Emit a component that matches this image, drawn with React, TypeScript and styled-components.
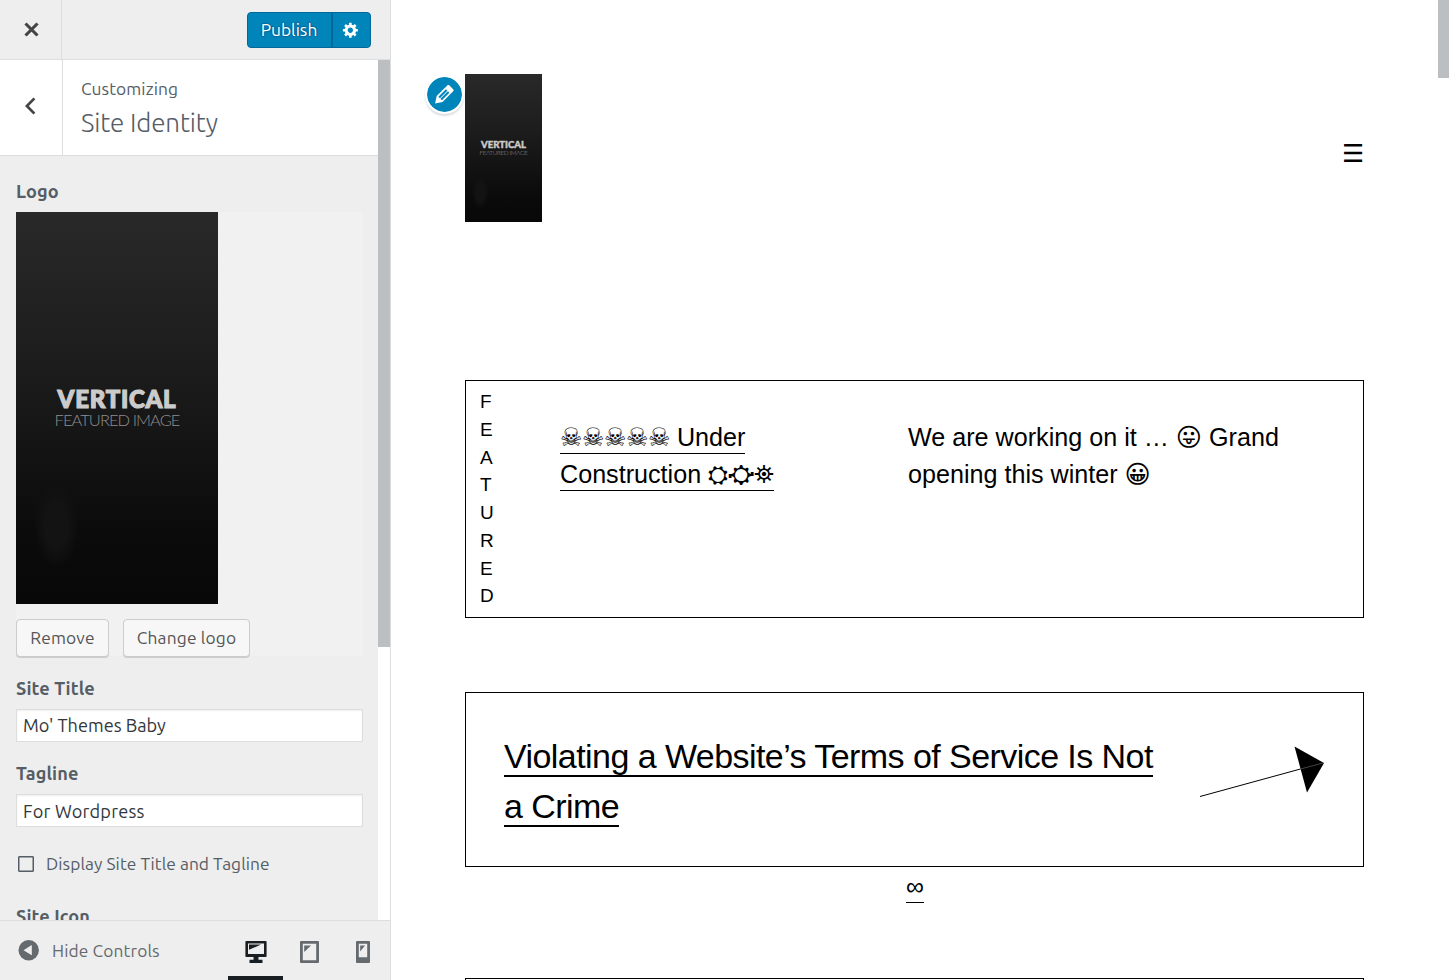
import React from "react";
import styled, { createGlobalStyle } from "styled-components";

const GlobalStyle = createGlobalStyle`
  * { box-sizing: border-box; }
  html, body { margin: 0; padding: 0; background: #fff; overflow: hidden; }
  button, input { font: inherit; margin: 0; }
`;

const uiFont = `"Ubuntu", "Noto Sans", "Open Sans", sans-serif`;
const siteFont = `"Liberation Sans", "DejaVu Sans", sans-serif`;

const Shell = styled.div`
  display: flex;
  width: 1449px;
  height: 980px;
  overflow: hidden;
`;

/* ---------- customizer sidebar ---------- */

const Sidebar = styled.aside`
  display: flex;
  flex-direction: column;
  flex: none;
  width: 391px;
  height: 980px;
  border-right: 1px solid #ddd;
  background: #eee;
  font-family: ${uiFont};
  color: #555d66;
`;

const TopBar = styled.header`
  display: flex;
  align-items: center;
  flex: none;
  height: 60px;
  padding-right: 19px;
  border-bottom: 1px solid #ddd;
`;

const CloseButton = styled.button`
  display: flex;
  align-items: center;
  width: 62px;
  height: 59px;
  margin-right: auto;
  padding: 0 0 0 24px;
  border: 0;
  border-right: 1px solid #ddd;
  background: none;
`;

const PublishGroup = styled.div`
  display: flex;
  height: 36px;
  border: 1px solid #006799;
  border-radius: 4px;
  overflow: hidden;
  background: #0085ba;
`;

const PublishButton = styled.button`
  width: 85px;
  padding: 0 1px 0 0;
  border: 0;
  border-right: 2px solid #006799;
  background: none;
  color: #fff;
  font-size: 17.33px;
  line-height: 34px;
  text-shadow: 0 -1px 1px #006799, 1px 0 1px #006799, 0 1px 1px #006799, -1px 0 1px #006799;
`;

const GearButton = styled.button`
  display: flex;
  align-items: center;
  justify-content: center;
  width: 37px;
  padding: 0 2px 0 0;
  border: 0;
  background: none;
`;

const PanelScroller = styled.div`
  display: flex;
  flex: 1;
  min-height: 0;
`;

const Panel = styled.div`
  display: flex;
  flex-direction: column;
  width: 378px;
  overflow: hidden;
`;

const ScrollTrack = styled.div<{ $width: number }>`
  flex: none;
  width: ${(p) => p.$width}px;
  background: #fff;
`;

const ScrollThumb = styled.div<{ $height: number }>`
  height: ${(p) => p.$height}px;
  background: #bbbfc2;
`;

const PanelHead = styled.div`
  display: flex;
  flex: none;
  height: 96px;
  border-bottom: 1px solid #ddd;
  background: #fff;
`;

const BackButton = styled.button`
  display: flex;
  align-items: center;
  width: 63px;
  padding: 0 0 4px 25px;
  border: 0;
  border-right: 1px solid #ddd;
  background: none;
`;

const PanelTitle = styled.div`
  padding: 17px 0 0 18px;
`;

const Crumb = styled.div`
  font-size: 17.33px;
  line-height: 24px;
  letter-spacing: 0.1px;
`;

const Heading = styled.h1`
  margin: 4px 0 0;
  font-size: 26px;
  font-weight: 300;
  line-height: 36px;
  letter-spacing: -0.13px;
`;

const Controls = styled.div`
  display: flex;
  flex-direction: column;
  padding: 23px 15px 0 16px;
`;

const Label = styled.label<{ $top?: number }>`
  margin: ${(p) => p.$top ?? 0}px 0 9px;
  height: 24px;
  font-size: 18.1px;
  font-weight: 700;
  line-height: 24px;
  letter-spacing: 0.12px;
`;

const LogoSetting = styled.div`
  height: 444px;
  background: #f1f1f1;
`;

const Poster = styled.div<{ $small?: boolean }>`
  display: flex;
  flex-direction: column;
  align-items: center;
  flex: none;
  width: ${(p) => (p.$small ? 77 : 202)}px;
  height: ${(p) => (p.$small ? 148 : 392)}px;
  padding-top: ${(p) => (p.$small ? 65 : 175)}px;
  background: radial-gradient(ellipse 11% 11% at 20% 80%, #131313 50%, transparent),
    linear-gradient(#292929, #1c1c1c 40%, #0b0b0b 82%, #080808);
  font-family: Lato, sans-serif;
  white-space: nowrap;
`;

const PosterTitle = styled.div<{ $small?: boolean }>`
  color: #cbcbcb;
  font-size: ${(p) => (p.$small ? 9.6 : 24)}px;
  font-weight: 900;
  line-height: ${(p) => (p.$small ? 11 : 24)}px;
  letter-spacing: ${(p) => (p.$small ? 0 : 0.75)}px;
  -webkit-text-stroke: ${(p) => (p.$small ? 0.4 : 1.2)}px #cbcbcb;
`;

const PosterSubtitle = styled.div<{ $small?: boolean }>`
  color: ${(p) => (p.$small ? "#999" : "#8e8e8e")};
  font-size: ${(p) => (p.$small ? 6.3 : 16.5)}px;
  font-weight: 300;
  line-height: ${(p) => (p.$small ? 6 : 18)}px;
  letter-spacing: ${(p) => (p.$small ? -0.33 : -0.95)}px;
`;

const ButtonRow = styled.div`
  display: flex;
  gap: 14px;
  margin-top: 15px;
`;

const GreyButton = styled.button<{ $width: number }>`
  width: ${(p) => p.$width}px;
  height: 38px;
  padding: 0;
  border: 1px solid #ccc;
  border-radius: 4px;
  background: #f7f7f7;
  box-shadow: 0 1px 0 #ccc;
  color: #555;
  font-size: 17.33px;
  line-height: 34px;
  letter-spacing: 0.18px;
`;

const TextField = styled.input<{ $lift?: number; $spacing?: number }>`
  width: 347px;
  height: 33px;
  padding: 0 6px ${(p) => p.$lift ?? 0}px;
  border: 1px solid #ddd;
  border-radius: 0;
  outline: 0;
  background: #fff;
  box-shadow: inset 0 1px 2px rgba(0, 0, 0, 0.07);
  color: #32373c;
  font-size: 18.15px;
  letter-spacing: ${(p) => p.$spacing ?? 0}px;
`;

const CheckRow = styled.label`
  display: flex;
  align-items: center;
  height: 24px;
  margin-top: 25px;
  padding-left: 2px;
  font-size: 17.33px;
  letter-spacing: 0.07px;
`;

const CheckText = styled.span`
  padding-bottom: 2px;
`;

const CheckBox = styled.span`
  width: 16px;
  height: 16px;
  margin-right: 12px;
  border: 1.5px solid #555d66;
  border-radius: 1px;
  box-shadow: inset 0 0 0 0.5px #555d66;
`;

const Footer = styled.footer`
  display: flex;
  flex: none;
  height: 60px;
  border-top: 1px solid #ddd;
`;

const HideControls = styled.button`
  display: flex;
  align-items: center;
  flex: none;
  gap: 13px;
  width: 228px;
  height: 59px;
  padding: 0 0 0 18px;
  border: 0;
  background: none;
  color: #656a6f;
  font-size: 17.33px;
  letter-spacing: 0.12px;
`;

const Device = styled.button<{ $active?: boolean; $width: number }>`
  display: flex;
  justify-content: center;
  flex: none;
  width: ${(p) => p.$width}px;
  height: 59px;
  padding: 20px 0 0;
  border: 0;
  border-bottom: 4px solid ${(p) => (p.$active ? "#191e23" : "transparent")};
  background: none;
`;

/* ---------- site preview ---------- */

const Preview = styled.main`
  flex: 1;
  min-width: 0;
  padding: 74px 74px 0;
  font-family: ${siteFont};
  font-size: 25.15px;
  line-height: 37px;
  color: #000;
`;

const SiteHeader = styled.div`
  position: relative;
  display: flex;
  justify-content: space-between;
  height: 306px;
`;

const EditShortcut = styled.button`
  position: absolute;
  left: -40px;
  top: 1px;
  display: flex;
  align-items: center;
  justify-content: center;
  width: 39px;
  height: 39px;
  padding: 0;
  border: 2px solid #fff;
  border-radius: 50%;
  background: #0085ba;
  background-clip: padding-box;
  box-shadow: 0 2px 2px rgba(46, 68, 83, 0.18);
`;

const MenuToggle = styled.span`
  height: 37px;
  margin-top: 61px;
  font-size: 24.67px;
`;

const Featured = styled.section`
  display: flex;
  height: 238px;
  padding: 7px 14px;
  border: 1px solid #000;
`;

const VerticalWord = styled.div`
  display: flex;
  flex-direction: column;
  width: 80px;
  font-size: 19px;
  line-height: 27.75px;
`;

const FeaturedTitle = styled.div`
  width: 348px;
  padding: 31px 100px 0 0;
`;

const FeaturedText = styled.div`
  width: 400px;
  padding-top: 31px;
`;

const SiteLink = styled.a<{ $thick?: boolean }>`
  padding-bottom: ${(p) => (p.$thick ? 0 : 2)}px;
  border-bottom: ${(p) => (p.$thick ? 2 : 1)}px solid #000;
`;

const Skulls = styled.span`
  letter-spacing: -0.55px;
`;

const Card = styled.article`
  display: flex;
  justify-content: space-between;
  height: 175px;
  margin-top: 74px;
  padding: 38px;
  border: 1px solid #000;
`;

const CardTitle = styled.h2`
  width: 670px;
  margin: 0;
  font-size: 34px;
  font-weight: 400;
  line-height: 50px;
  letter-spacing: -0.56px;
`;

const Separator = styled.div`
  height: 37px;
  padding: 1px 0 0 1px;
  text-align: center;
`;

const ArrowIcon = styled.svg`
  flex: none;
  margin: 14px 1px 0 0;
`;

function Artwork({ small }: { small?: boolean }) {
  return (
    <Poster $small={small}>
      <PosterTitle $small={small}>VERTICAL</PosterTitle>
      <PosterSubtitle $small={small}>FEATURED IMAGE</PosterSubtitle>
    </Poster>
  );
}

function GearIcon() {
  return (
    <svg width="17.6" height="17.6" viewBox="0 0 20 20" fill="#fff">
      <path d="M18 12h-2.18c-.17.7-.44 1.35-.81 1.93l1.54 1.54-2.1 2.1-1.54-1.54c-.58.36-1.23.63-1.91.79V19H8v-2.18c-.68-.16-1.33-.43-1.91-.79l-1.54 1.54-2.12-2.12 1.54-1.54c-.36-.58-.63-1.23-.79-1.91H1V9.03h2.17c.16-.7.44-1.35.8-1.94L2.43 5.55l2.1-2.1 1.54 1.54c.58-.37 1.24-.64 1.93-.81V2h3v2.18c.68.16 1.33.43 1.91.79l1.54-1.54 2.12 2.12-1.54 1.54c.36.59.64 1.24.8 1.94H18V12zm-8.5 1.5c1.66 0 3-1.34 3-3s-1.34-3-3-3-3 1.34-3 3 1.34 3 3 3z" />
    </svg>
  );
}

function PencilIcon() {
  return (
    <svg width="26.67" height="26.67" viewBox="0 0 20 20" fill="#fff">
      <path d="M13.89 3.39l2.71 2.72c.46.46.42 1.24.03 1.64l-8.01 8.02-5.56 1.16 1.16-5.58s7.6-7.63 7.99-8.03c.39-.39 1.22-.39 1.68.07zm-2.73 2.79l-5.59 5.61 1.11 1.11 5.54-5.65zm-2.97 8.23l5.58-5.6-1.07-1.08-5.59 5.6z" />
    </svg>
  );
}

export default function App() {
  return (
    <Shell>
      <GlobalStyle />
      <Sidebar>
        <TopBar>
          <CloseButton aria-label="Close">
            <svg width="15" height="15" viewBox="0 0 15 15">
              <path d="M1.5 1.5L13.5 13.5M13.5 1.5L1.5 13.5" stroke="#444" strokeWidth="3.1" />
            </svg>
          </CloseButton>
          <PublishGroup>
            <PublishButton>Publish</PublishButton>
            <GearButton aria-label="Publish settings">
              <GearIcon />
            </GearButton>
          </PublishGroup>
        </TopBar>

        <PanelScroller>
          <Panel>
            <PanelHead>
              <BackButton aria-label="Back">
                <svg width="11" height="18" viewBox="0 0 11 18">
                  <path d="M9.4 1.4L1.9 9L9.4 16.6" fill="none" stroke="#444" strokeWidth="2.7" />
                </svg>
              </BackButton>
              <PanelTitle>
                <Crumb>Customizing</Crumb>
                <Heading>Site Identity</Heading>
              </PanelTitle>
            </PanelHead>
            <Controls>
              <Label>Logo</Label>
              <LogoSetting>
                <Artwork />
                <ButtonRow>
                  <GreyButton $width={93}>Remove</GreyButton>
                  <GreyButton $width={127}>Change logo</GreyButton>
                </ButtonRow>
              </LogoSetting>
              <Label $top={20}>Site Title</Label>
              <TextField $lift={2} defaultValue="Mo' Themes Baby" />
              <Label $top={19}>Tagline</Label>
              <TextField $spacing={0.2} defaultValue="For Wordpress" />
              <CheckRow>
                <CheckBox />
                <CheckText>Display Site Title and Tagline</CheckText>
              </CheckRow>
              <Label $top={28}>Site Icon</Label>
            </Controls>
          </Panel>
          <ScrollTrack $width={12}>
            <ScrollThumb $height={587} />
          </ScrollTrack>
        </PanelScroller>

        <Footer>
          <HideControls>
            <svg width="21" height="21" viewBox="0 0 21 21">
              <circle cx="10.7" cy="10.2" r="10.2" fill="#656a6f" />
              <path d="M5.5 10.2L13.8 5.1V15.3Z" fill="#eee" />
            </svg>
            Hide Controls
          </HideControls>
          <Device $active $width={55} aria-label="Desktop">
            <svg width="22" height="22" viewBox="0 0 22 22" fill="#191e23">
              <path fillRule="evenodd" d="M1.2 0H20.8Q21.6 0 21.6 1V15Q21.6 16 20.8 16H13.5V18.8H17.5V22H4.5V18.8H8.5V16H1.2Q.4 16 .4 15V1Q.4 0 1.2 0ZM3 2.6V13H19V2.6Z" />
              <path d="M4 3.6H16L4 8.8Z" />
            </svg>
          </Device>
          <Device $width={52} aria-label="Tablet">
            <svg width="19" height="22" viewBox="0 0 19 22" fill="#656a6f">
              <path fillRule="evenodd" d="M1 0H18Q19 0 19 1V21Q19 22 18 22H1Q0 22 0 21V1Q0 0 1 0ZM2.8 2.8V19.2H16.2V2.8Z" />
              <path d="M4.2 4.6H11L4.2 11Z" />
            </svg>
          </Device>
          <Device $width={55} aria-label="Mobile">
            <svg width="14" height="22" viewBox="0 0 14 22" fill="#656a6f">
              <path fillRule="evenodd" d="M1 0H13Q14 0 14 1V21Q14 22 13 22H1Q0 22 0 21V1Q0 0 1 0ZM2.8 2.8V16.3H11.2V2.8Z" />
              <path d="M4.2 4.4H9L4.2 10.5Z" />
            </svg>
          </Device>
        </Footer>
      </Sidebar>

      <Preview>
        <SiteHeader>
          <Artwork small />
          <EditShortcut aria-label="Edit">
            <PencilIcon />
          </EditShortcut>
          <MenuToggle>☰</MenuToggle>
        </SiteHeader>

        <Featured>
          <VerticalWord>
            {"FEATURED".split("").map((letter, i) => (
              <span key={i}>{letter}</span>
            ))}
          </VerticalWord>
          <FeaturedTitle>
            <SiteLink>
              <Skulls>☠☠☠☠☠</Skulls> Under Construction ⛭⛮⛯
            </SiteLink>
          </FeaturedTitle>
          <FeaturedText>We are working on it … 😛 Grand opening this winter 😀</FeaturedText>
        </Featured>

        <Card>
          <CardTitle>
            <SiteLink $thick>Violating a Website’s Terms of Service Is Not a Crime</SiteLink>
          </CardTitle>
          <ArrowIcon width="126" height="52" viewBox="0 0 126 52">
            <path d="M96.5 1.5L126 18L109 47.5Z" fill="#000" />
            <path d="M2 51.5L102.5 24" stroke="#000" strokeWidth="1" />
            <path d="M102.5 24L125 18" stroke="#444" strokeWidth="1" />
          </ArrowIcon>
        </Card>

        <Separator>
          <SiteLink>∞</SiteLink>
        </Separator>

        <Card />
      </Preview>
      <ScrollTrack $width={11}>
        <ScrollThumb $height={78} />
      </ScrollTrack>
    </Shell>
  );
}
